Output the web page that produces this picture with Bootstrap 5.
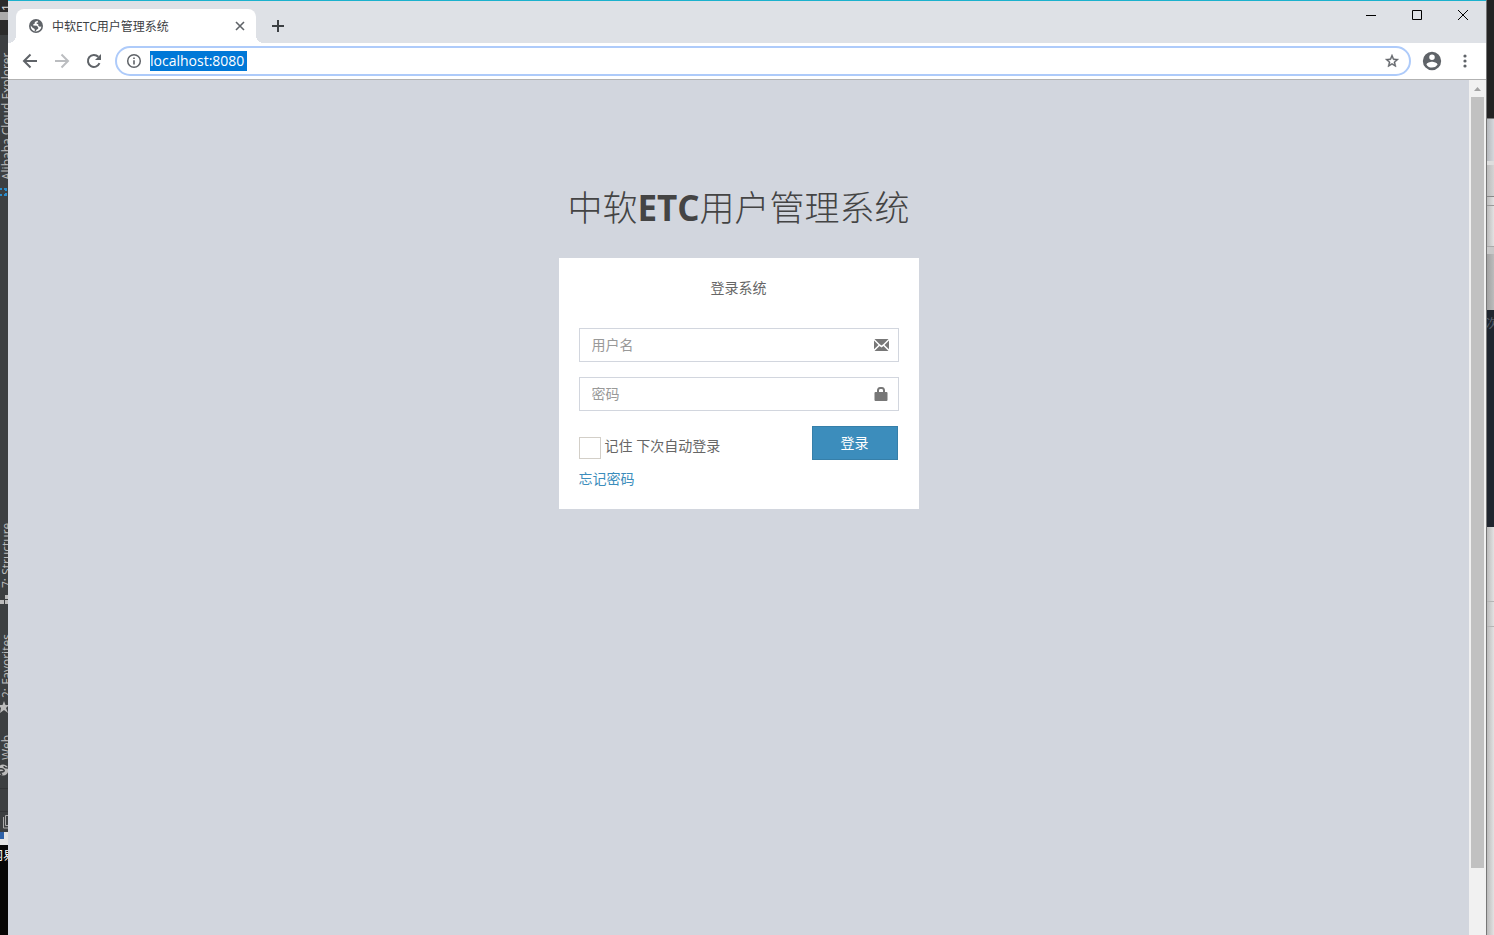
<!DOCTYPE html>
<html lang="zh-CN">
<head>
<meta charset="utf-8">
<meta name="viewport" content="width=device-width, initial-scale=1">
<title>中软ETC用户管理系统</title>
<link href="https://cdn.jsdelivr.net/npm/bootstrap@5.3.0/dist/css/bootstrap.min.css" rel="stylesheet">
<style>
body{font-family:"Open Sans","Noto Sans CJK SC",sans-serif;font-size:14px;line-height:20px;color:#666;background:#3c3f41}
svg{display:block;flex:none}
.edge{width:8px;flex:none;overflow:hidden}
.edge>*{flex:none}
/* IDE tool stripe */
.ide{background:#3c3f41;color:#bbb;font-size:12px;line-height:14px}
.vtext{writing-mode:vertical-rl;transform:rotate(180deg);white-space:nowrap;width:14px}
.ide-top{height:35px;background:linear-gradient(#2b2b2b 12px,#aaa 12px,#aaa 20px,#2b2b2b 20px);color:#ddd}
.h-one{height:11px}.h-a{height:145px}.h-b{height:320px}.h-s{height:68px}.h-f{height:90px}.h-w{height:42px}
.ide-dark{background:#070605;flex:1 1 0 !important;color:#fff;text-indent:-9px}
.ide-img{height:13px;background:linear-gradient(90deg,transparent 4px,#e4e4e4 4px),linear-gradient(#2f62a8 7px,#e4e4e4 7px)}
/* windows behind, on the right */
.behind{background:linear-gradient(90deg,#bbb,#e2e2e2);border-left:1px solid #777}
.b1{height:118px;background:#232323;margin-left:-1px}
.b2{height:43px;background:linear-gradient(90deg,#b5b8bc,#d5d8dc);border-top:1px solid #777}
.b3{height:36px;border-bottom:1px solid #888;background:linear-gradient(90deg,#bbb,#d4d4d4);border-top:4px solid #ddd}
.b4{height:9px;border-bottom:1px solid #999}
.b5{height:41px;border-bottom:1px solid #aaa}
.b6{height:63px;background:linear-gradient(90deg,#a2a2a2,#bcbcbc);border-top:7px solid #c8c8c8}
.b7{height:217px;background:#20262f;color:#59616c;font-size:12px;padding-top:4px;margin-left:-1px}
.b8{height:75px;border-bottom:1px solid #b5b5b5}
.b9{height:25px;border-bottom:1px solid #b5b5b5}
/* browser frame */
.plain{border:0;background:none;padding:0;display:flex;align-items:center;justify-content:center;color:#5f6368}
.tabbar{height:43px;background:#dee1e6;border-top:1px solid #1bb1cd;padding-left:8px}
.tab-item{width:240px;height:34px;background:#fff;border-radius:8px 8px 0 0;padding:0 10px 0 13px;font-size:12px;color:#3c4043;position:relative;align-self:flex-end}
.tab-item::before,.tab-item::after{content:"";position:absolute;bottom:0;width:8px;height:8px}
.tab-item::before{left:-8px;background:radial-gradient(circle at 0 0,transparent 8px,#fff 8px)}
.tab-item::after{right:-8px;background:radial-gradient(circle at 100% 0,transparent 8px,#fff 8px)}
.tab-label{margin-left:9px;padding-top:2px}
.newtab{width:28px;height:28px;margin:11px 0 0 8px}
.winbtn{width:46px;height:28px;color:#000}
.toolbar{height:37px;background:#fff;border-bottom:1px solid #b2b2b2;padding:0 9px 0 6px}
.nav-btn{width:32px;height:32px}
.omni{height:30px;border:2px solid #aecbfa;border-radius:15px;padding:0 9px;margin-left:5px}
.omni input{border:0;outline:0;padding:0;color:#fff;height:20px;width:97px;background:#0078d7;font-size:14px}
.acct{width:30px;height:30px;margin-left:6px}
.dots{width:24px;height:30px;margin-left:6px}
/* page */
.viewport{background:#d2d6de;padding-top:1px}
.login-box{width:360px;margin:7% auto 0}
.login-logo{font-size:35px;line-height:50px;font-weight:300;color:#444;margin:0 0 25px;text-align:center;white-space:nowrap}
.login-logo b{font-weight:700}
.login-body{background:#fff;padding:20px}
.login-msg{margin:0 0 30px;text-align:center}
.field{height:34px;border:1px solid #d2d6de;margin-bottom:15px;padding:0 9px 0 12px;color:#777}
.field input{border:0;outline:0;padding:0;font-size:14px;color:#555;min-width:0}
.field input::placeholder{color:#999;opacity:1}
.field:focus-within{border-color:#3c8dbc}
.check-box{appearance:none;width:22px;height:22px;border:1px solid #d3cfc8;background:#fff;margin:0 4px 0 0}
.check-box:checked{background:#3c8dbc}
.remember{margin-top:11px;line-height:18px}
.btn-login{width:86px;height:34px;background:#3c8dbc;border:1px solid #367fa9;border-radius:0;color:#fff;font-size:14px;line-height:20px;padding:0;margin-right:1px}
.btn-login:hover{background:#367fa9;color:#fff}
.forgot{color:#3c8dbc;text-decoration:none;margin-top:9px}
.sbar{width:17px;background:#f1f1f1;flex:none}
.sbar-arrow{height:17px;width:17px}
.sbar-thumb{height:92%;margin:0 2px;background:#c1c1c1}
</style>
</head>
<body class="d-flex vh-100 overflow-hidden">
<aside class="edge ide d-flex flex-column">
  <div class="ide-top"><div class="vtext h-one">1</div></div>
  <div class="vtext h-a">Alibaba Cloud Explorer</div>
  <svg width="8" height="20" viewBox="0 0 8 20" fill="none" stroke="#2a8ccb" stroke-width="2"><path d="M0 9h2M4 9h3M6 9v2M0 15h2M4 15h3M6 13v2"/></svg>
  <div class="h-b"></div>
  <div class="vtext h-s">7: Structure</div>
  <svg width="8" height="20" viewBox="0 0 8 20" fill="#bbb"><path d="M5 7h3v4H5zM0 12h4v4H0zM5 12h3v4H5z"/></svg>
  <div class="vtext h-f">2: Favorites</div>
  <svg width="8" height="20" viewBox="0 0 8 20" fill="#bbb"><path d="M4 3l1.500 4H9L6 10l2 5-4-3-4 3 1-5-3-3h4.500z"/></svg>
  <div class="vtext h-w">Web</div>
  <svg width="8" height="24" viewBox="0 0 8 24"><circle cx="3" cy="10" r="5.500" fill="#bbb"/><path d="M-1 9q4-1 5 1t-4 2l2 3M4 6q0 2 4 2" fill="none" stroke="#3c3f41" stroke-width="1.500"/></svg>
  <svg width="8" height="48" viewBox="0 0 8 48" fill="none" stroke="#aaa"><path d="M0 4.500h8M0 27.500h8" stroke="#323436"/><path d="M3.500 33v11H8M8 41.500H5.500v-10H8"/></svg>
  <div class="ide-img"></div>
  <div class="ide-dark text-nowrap pt-1">网易</div>
</aside>

<main class="d-flex flex-column flex-grow-1 overflow-hidden">
  <header class="tabbar d-flex align-items-start">
    <div class="tab-item d-flex align-items-center">
      <svg width="14" height="14" viewBox="0 0 14 14"><circle cx="7" cy="7" r="7" fill="#5f6368"/><path d="M8.500 1.700L5.800 3v1.600l-1.500.6v1.300l3.500.2 1.400 1.500v1.600l-1.600 1-.9 1.400-1-.3v-2L3.600 8.700 1.700 6.600a5.300 5.300 0 0 0 5.200 5.800 5.400 5.400 0 0 0 5.500-5l-1.600.4-1.500-1V5.300l-1.700-.6.200-1.200h1.500z" fill="#fff"/></svg>
      <span class="tab-label flex-grow-1 text-nowrap">中软ETC用户管理系统</span>
      <button class="plain" aria-label="关闭标签页"><svg width="12" height="12" viewBox="0 0 12 12" stroke="#5f6368" stroke-width="1.600"><path d="M2 2l8 8M10 2l-8 8"/></svg></button>
    </div>
    <button class="plain newtab" aria-label="新标签页"><svg width="14" height="14" viewBox="0 0 14 14" stroke="#3c4043" stroke-width="2"><path d="M7 1v12M1 7h12"/></svg></button>
    <div class="d-flex ms-auto">
      <button class="plain winbtn" aria-label="最小化"><svg width="10" height="10" viewBox="0 0 10 10" stroke="#000"><path d="M0 5.500h10"/></svg></button>
      <button class="plain winbtn" aria-label="最大化"><svg width="10" height="10" viewBox="0 0 10 10" stroke="#000" fill="none"><path d="M.5 .5h9v9h-9z"/></svg></button>
      <button class="plain winbtn" aria-label="关闭"><svg width="10" height="10" viewBox="0 0 10 10" stroke="#000"><path d="M0 0l10 10M10 0L0 10"/></svg></button>
    </div>
  </header>
  <nav class="toolbar d-flex align-items-center" aria-label="浏览器">
    <button class="plain nav-btn" aria-label="后退"><svg width="16" height="16" viewBox="0 0 16 16" fill="none" stroke="#5f6368" stroke-width="2"><path d="M15 8H2.500M8.500 1.500L2 8l6.500 6.500"/></svg></button>
    <button class="plain nav-btn" aria-label="前进"><svg width="16" height="16" viewBox="0 0 16 16" fill="none" stroke="#bbbdc0" stroke-width="2"><path d="M1 8h12.500M7.500 1.500L14 8l-6.500 6.500"/></svg></button>
    <button class="plain nav-btn" aria-label="刷新"><svg width="16" height="16" viewBox="0 0 16 16"><path d="M13.500 10.200A6 6 0 1 1 12.300 3.800" fill="none" stroke="#5f6368" stroke-width="2"/><path d="M15 1v6H9z" fill="#5f6368"/></svg></button>
    <div class="omni d-flex align-items-center flex-grow-1">
      <svg width="16" height="16" viewBox="0 0 16 16"><circle cx="8" cy="8" r="6.300" fill="none" stroke="#5f6368" stroke-width="1.500"/><path d="M7.200 4.500h1.600v1.600H7.200zM7.200 7.200h1.600v4.300H7.200z" fill="#5f6368"/></svg>
      <input class="ms-2" type="text" value="localhost:8080" aria-label="地址">
      <button class="plain ms-auto" aria-label="收藏"><svg width="16" height="16" viewBox="0 0 24 24" fill="#5f6368"><path d="M22 9.240l-7.190-.62L12 2 9.190 8.630 2 9.240l5.460 4.730L5.820 21 12 17.270 18.180 21l-1.630-7.030zM12 15.400l-3.760 2.270 1-4.280-3.320-2.880 4.380-.38L12 6.100l1.710 4.040 4.380.38-3.320 2.880 1 4.280z" stroke="#5f6368" stroke-width=".6"/></svg></button>
    </div>
    <button class="plain acct" aria-label="用户"><svg width="22" height="22" viewBox="0 0 24 24" fill="#5f6368"><path d="M12 2a10 10 0 1 0 0 20 10 10 0 0 0 0-20zm0 3a3 3 0 1 1 0 6 3 3 0 0 1 0-6zm0 14.200a7.200 7.200 0 0 1-6-3.220c.03-1.990 4-3.080 6-3.080s5.970 1.090 6 3.080a7.200 7.200 0 0 1-6 3.220z"/></svg></button>
    <button class="plain dots" aria-label="菜单"><svg width="4" height="14" viewBox="0 0 4 14" fill="#5f6368"><circle cx="2" cy="2" r="1.600"/><circle cx="2" cy="7" r="1.600"/><circle cx="2" cy="12" r="1.600"/></svg></button>
  </nav>
  <div class="d-flex flex-grow-1 overflow-hidden">
    <div class="viewport flex-grow-1">
      <div class="login-box">
        <h1 class="login-logo">中软<b>ETC</b>用户管理系统</h1>
        <form class="login-body">
          <p class="login-msg">登录系统</p>
          <div class="field d-flex align-items-center">
            <input class="flex-grow-1" type="text" placeholder="用户名" aria-label="用户名">
            <svg width="15" height="12" viewBox="0 0 15 12" fill="#777"><path d="M.5 0h14l-5 5-2 1.400-2-1.400zM0 1.500L4.500 6 0 10.200zM15 1.500L10.500 6l4.500 4.200zM.5 12l5-5 2 1.500 2-1.500 5 5z"/></svg>
          </div>
          <div class="field d-flex align-items-center">
            <input class="flex-grow-1" type="password" placeholder="密码" aria-label="密码">
            <svg width="15" height="14" viewBox="0 0 15 14" fill="#777"><path d="M.5 6q0-1 1-1H3V3Q3.500 0 6 0h2q2.500 0 3 3v2h1.500q1 0 1 1v7q0 1-1 1h-11q-1 0-1-1zM5 5h4V3.500Q9 2 8 2H6Q5 2 5 3.500z"/></svg>
          </div>
          <div class="d-flex justify-content-between align-items-start">
            <div class="remember d-flex align-items-start">
              <input class="check-box" type="checkbox" id="remember">
              <label for="remember">记住 下次自动登录</label>
            </div>
            <button class="btn btn-login" type="submit">登录</button>
          </div>
          <a class="forgot d-block" href="#">忘记密码</a>
        </form>
      </div>
    </div>
    <div class="sbar d-flex flex-column">
      <svg class="sbar-arrow" viewBox="0 0 17 17" fill="#a3a3a3"><path d="M5 11l3.500-4 3.500 4z"/></svg>
      <div class="flex-grow-1"><div class="sbar-thumb"></div></div>
    </div>
  </div>
</main>

<aside class="edge behind d-flex flex-column">
  <div class="b1"></div><div class="b2"></div><div class="b3"></div><div class="b4"></div><div class="b5"></div><div class="b6"></div>
  <div class="b7 text-nowrap">次</div><div class="b8"></div><div class="b9"></div>
</aside>
</body>
</html>
